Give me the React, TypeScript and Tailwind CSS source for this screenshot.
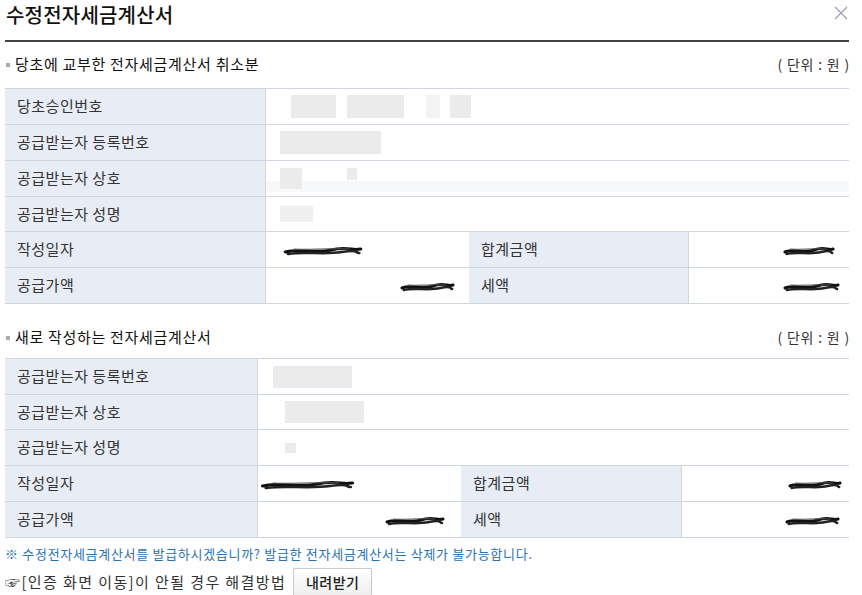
import React from "react";

const font = { fontFamily: '"Noto Sans CJK KR", "Noto Sans", sans-serif' };

const Blur = ({ w, h, ml = 0, mt = 0, c = "bg-[#ebebeb]" }: { w: number; h: number; ml?: number; mt?: number; c?: string }) => (
    <div className={c} style={{ width: w, height: h, marginLeft: ml, marginTop: mt }} />
);

const Scribble = ({ w }: { w: number }) => (
    <svg width={w} height="12" viewBox="0 0 60 12" preserveAspectRatio="none">
        <path d="M2 7 C12 3 24 9 36 5 S52 6 58 4" stroke="#111" strokeWidth="3" fill="none" strokeLinecap="round" />
        <path d="M4 9 C16 6 30 10 44 7 S54 8 57 8" stroke="#222" strokeWidth="2.5" fill="none" strokeLinecap="round" />
        <path d="M8 4 C20 5 34 3 50 4" stroke="#555" strokeWidth="1" fill="none" />
    </svg>
);

const Label = ({ children, w }: { children: React.ReactNode; w: string }) => (
    <div className={`${w} shrink-0 bg-[#e8ecf5] border-r border-[#cfd6e3] flex items-center pl-3 text-[15px] tracking-[0.5px] text-[#333]`}>
        {children}
    </div>
);

const SectionTitle = ({ text }: { text: string }) => (
    <div className="flex items-center justify-between h-[21px]">
        <div className="flex items-center">
            <span className="w-[4px] h-[4px] bg-[#aaa] mr-[5px] ml-[1px]" />
            <span className="text-[15px] tracking-[0.7px] text-[#111]">{text}</span>
        </div>
        <span className="text-[14px] tracking-[0.8px] text-[#333] mr-[-1px]">( 단위 : 원 )</span>
    </div>
);

export default function App() {
    return (
        <div className="w-[862px] h-[595px] bg-white pl-[5px] pr-[13px] overflow-hidden" style={font}>
            <div className="flex items-center justify-between h-[30px] pl-[1px]">
                <h2 className="text-[20px] font-medium text-[#111] tracking-[0.2px]">수정전자세금계산서</h2>
                <svg width="14" height="14" viewBox="0 0 14 14" className="mt-[-4px] mr-[1px]">
                    <path d="M1 1 L13 13 M13 1 L1 13" stroke="#9aa0ad" strokeWidth="1.2" />
                </svg>
            </div>
            <div className="h-[2px] bg-[#444] mt-[10px]" />

            <div className="mt-[12px]">
                <SectionTitle text="당초에 교부한 전자세금계산서 취소분" />
            </div>

            <div className="mt-[13px] border-t border-[#cfd6e3]">
                <div className="flex h-[36px] border-b border-[#cfd6e3]">
                    <Label w="w-[261px]">당초승인번호</Label>
                    <div className="flex-1 flex items-center">
                        <Blur w={45} h={23} ml={25} />
                        <Blur w={57} h={23} ml={11} />
                        <Blur w={14} h={23} ml={22} c="bg-[#f3f3f3]" />
                        <Blur w={21} h={23} ml={10} />
                    </div>
                </div>
                <div className="flex h-[36px] border-b border-[#cfd6e3]">
                    <Label w="w-[261px]">공급받는자 등록번호</Label>
                    <div className="flex-1 flex items-center">
                        <Blur w={101} h={23} ml={14} />
                    </div>
                </div>
                <div className="flex h-[36px] border-b border-[#cfd6e3]">
                    <Label w="w-[261px]">공급받는자 상호</Label>
                    <div className="flex-1 flex items-center bg-[linear-gradient(to_bottom,white_0,white_20px,#f7f8fa_20px,#f7f8fa_31px,white_31px)]">
                        <Blur w={22} h={21} ml={14} />
                        <Blur w={10} h={12} ml={45} mt={-9} />
                    </div>
                </div>
                <div className="flex h-[35px] border-b border-[#cfd6e3]">
                    <Label w="w-[261px]">공급받는자 성명</Label>
                    <div className="flex-1 flex items-center">
                        <Blur w={33} h={16} ml={14} c="bg-[#efefef]" />
                    </div>
                </div>
                <div className="flex h-[36px] border-b border-[#cfd6e3]">
                    <Label w="w-[261px]">작성일자</Label>
                    <div className="w-[203px] flex items-center pl-[17px] pt-[2px]">
                        <Scribble w={80} />
                    </div>
                    <Label w="w-[220px]">합계금액</Label>
                    <div className="flex-1 flex items-center justify-end pr-[14px] pt-[2px]">
                        <Scribble w={52} />
                    </div>
                </div>
                <div className="flex h-[36px] border-b border-[#cfd6e3]">
                    <Label w="w-[261px]">공급가액</Label>
                    <div className="w-[203px] flex items-center justify-end pr-[14px] pt-[2px]">
                        <Scribble w={55} />
                    </div>
                    <Label w="w-[220px]">세액</Label>
                    <div className="flex-1 flex items-center justify-end pr-[9px] pt-[3px]">
                        <Scribble w={57} />
                    </div>
                </div>
            </div>

            <div className="mt-[23px]">
                <SectionTitle text="새로 작성하는 전자세금계산서" />
            </div>

            <div className="mt-[10px] border-t border-[#cfd6e3]">
                <div className="flex h-[36px] border-b border-[#cfd6e3]">
                    <Label w="w-[253px]">공급받는자 등록번호</Label>
                    <div className="flex-1 flex items-center">
                        <Blur w={79} h={22} ml={15} />
                    </div>
                </div>
                <div className="flex h-[35px] border-b border-[#cfd6e3]">
                    <Label w="w-[253px]">공급받는자 상호</Label>
                    <div className="flex-1 flex items-center">
                        <Blur w={79} h={22} ml={27} />
                    </div>
                </div>
                <div className="flex h-[36px] border-b border-[#cfd6e3]">
                    <Label w="w-[253px]">공급받는자 성명</Label>
                    <div className="flex-1 flex items-center">
                        <Blur w={11} h={10} ml={27} />
                    </div>
                </div>
                <div className="flex h-[36px] border-b border-[#cfd6e3]">
                    <Label w="w-[253px]">작성일자</Label>
                    <div className="w-[203px] flex items-center pl-[2px] pt-[2px]">
                        <Scribble w={95} />
                    </div>
                    <Label w="w-[221px]">합계금액</Label>
                    <div className="flex-1 flex items-center justify-end pr-[7px] pt-[2px]">
                        <Scribble w={54} />
                    </div>
                </div>
                <div className="flex h-[36px] border-b border-[#cfd6e3]">
                    <Label w="w-[253px]">공급가액</Label>
                    <div className="w-[203px] flex items-center justify-end pr-[16px] pt-[2px]">
                        <Scribble w={60} />
                    </div>
                    <Label w="w-[221px]">세액</Label>
                    <div className="flex-1 flex items-center justify-end pr-[9px] pt-[2px]">
                        <Scribble w={55} />
                    </div>
                </div>
            </div>

            <p className="mt-[7px] text-[13px] tracking-[0.7px] text-[#2a73b5] leading-[18px]">
                ※ 수정전자세금계산서를 발급하시겠습니까? 발급한 전자세금계산서는 삭제가 불가능합니다.
            </p>
            <div className="flex items-center mt-[5px]">
                <span className="text-[15px] tracking-[1.4px] text-[#333]">☞[인증 화면 이동]이 안될 경우 해결방법</span>
                <button className="ml-[7px] h-[29px] w-[79px] border border-[#c8c8c8] rounded-[2px] bg-gradient-to-b from-white to-[#eeeeee] text-[14px] tracking-[0.5px] text-[#222] font-medium">
                    내려받기
                </button>
            </div>
        </div>
    );
}
